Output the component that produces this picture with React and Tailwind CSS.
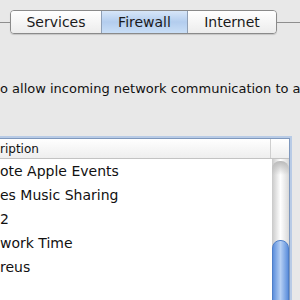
import React from "react";

const rows = ["ote Apple Events", "es Music Sharing", "2", "work Time", "reus"];

export default function App() {
  return (
    <div
      className="w-[300px] h-[300px] overflow-hidden bg-[#e8e8e8] text-[#111]"
      style={{ fontFamily: '"Lucida Grande", "DejaVu Sans", sans-serif' }}
    >
      {/* tab bar */}
      <div className="flex items-center pt-[10px]">
        <div className="w-[10px] h-px bg-[#8e8e8e]" />
        <div className="flex h-[24px] rounded-[4px] border border-[#8a8a8a] overflow-hidden shadow-[0_1px_1px_rgba(0,0,0,0.15)] text-[14px] text-[#1a1a1a]">
          <div className="w-[90px] flex items-center justify-center bg-gradient-to-b from-white to-[#ececec]">
            Services
          </div>
          <div className="w-[87px] flex items-center justify-center border-l border-r border-[#8f9fb5] bg-gradient-to-b from-[#d7e6f8] via-[#b3cdee] to-[#c9def6]">
            Firewall
          </div>
          <div className="w-[88px] flex items-center justify-center bg-gradient-to-b from-white to-[#ececec]">
            Internet
          </div>
        </div>
        <div className="flex-1 h-px bg-[#8e8e8e]" />
      </div>

      {/* description */}
      <div className="mt-[47px] text-[13px] leading-4 whitespace-nowrap overflow-hidden">
        o allow incoming network communication to a
      </div>

      {/* table */}
      <div className="mt-[41px] mr-[10px] h-[200px] border-t border-r border-[#7f98bd] shadow-[0_0_0_2px_#b8cbe6] bg-white flex flex-col">
        <div className="flex h-[20px] border-b border-[#c3c3c3] bg-gradient-to-b from-white to-[#eeeeee] text-[12px]">
          <div className="flex-1 flex items-center border-r border-[#cfcfcf]">ription</div>
          <div className="w-[18px]" />
        </div>
        <div className="flex flex-1">
          <div className="flex-1 text-[14px]">
            {rows.map((r) => (
              <div key={r} className="h-[24px] flex items-center">
                {r}
              </div>
            ))}
          </div>
          <div className="w-[17px] ml-[1px] flex flex-col bg-gradient-to-r from-[#c9c9c9] via-white to-[#d9d9d9]">
            <div className="h-[14px] mt-[2px] rounded-t-[8px] bg-gradient-to-b from-[#b9b9b9] to-transparent" />
            <div className="h-[65px]" />
            <div className="flex-1 rounded-t-[8px] border border-[#4f7fc8] bg-gradient-to-r from-[#5d8fdc] via-[#b6d0f4] to-[#5d8fdc]" />
          </div>
        </div>
      </div>
    </div>
  );
}
